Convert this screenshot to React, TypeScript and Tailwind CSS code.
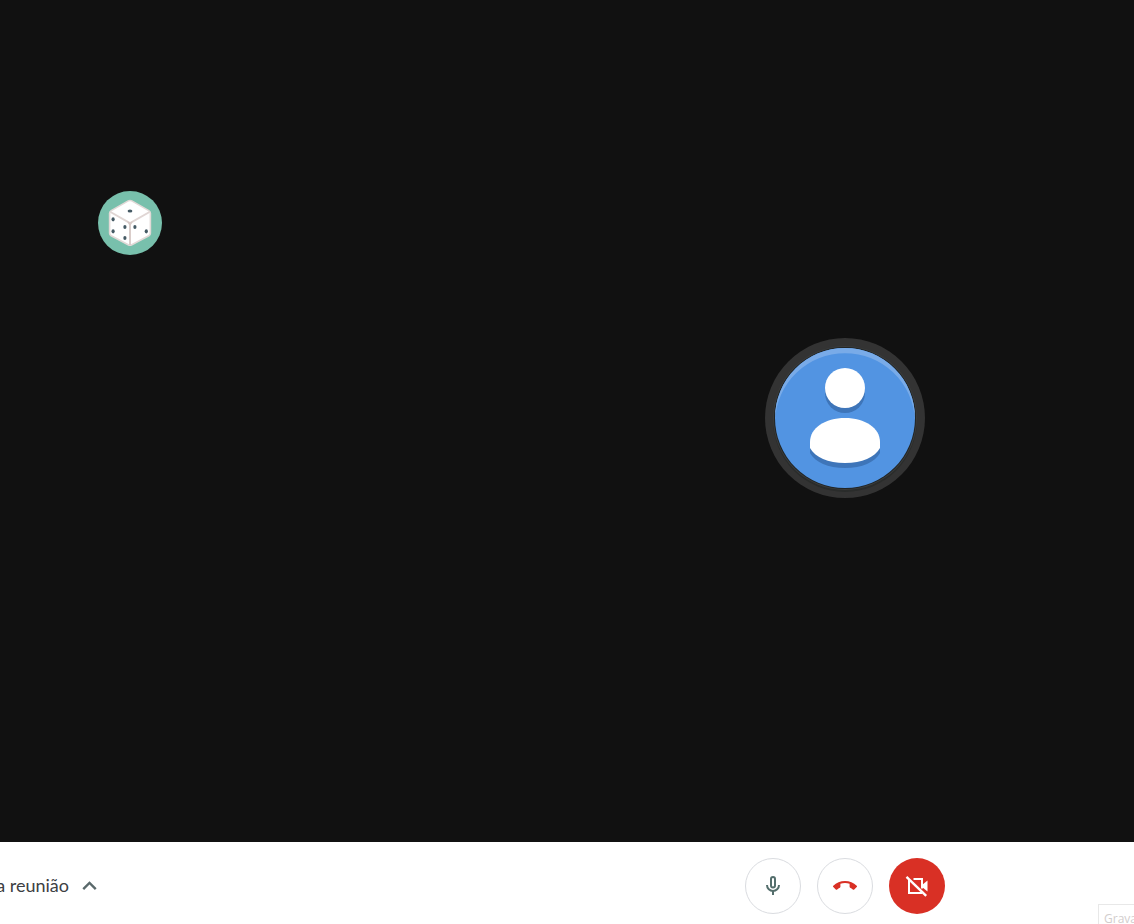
import React from "react";
import { MdCallEnd } from "react-icons/md";

function DiceAvatar() {
  return (
    <svg viewBox="0 0 64 64" className="size-16" role="img" aria-label="Dado">
      <circle cx="32" cy="32" r="32" fill="#78c0ac" />
      <path
        d="M30.2 9.9 Q32 9 33.8 9.9 L50.8 19.6 Q52.4 20.6 52.4 22.2 V42.2 Q52.4 43.8 50.8 44.8 L33.8 53.8 Q32 54.8 30.2 53.8 L13.2 44.8 Q11.6 43.8 11.6 42.2 V22.2 Q11.6 20.6 13.2 19.6 Z"
        fill="#fff"
        stroke="#e2d9d7"
        strokeWidth="1.6"
      />
      <path d="M12.5 21 L32 32 L51.5 21" fill="none" stroke="#e0d6d4" strokeWidth="2" />
      <path d="M29 30 L32 31.5 L35 30 L32.9 34 V54 H31.1 V34 Z" fill="#d6c8c5" />
      <g fill="#455a64">
        <ellipse cx="32" cy="20" rx="2.4" ry="1.6" />
        <ellipse cx="15.1" cy="28.3" rx="1.6" ry="2.1" />
        <ellipse cx="15.1" cy="40.3" rx="1.6" ry="2.1" />
        <ellipse cx="26.9" cy="36" rx="1.6" ry="2.1" />
        <ellipse cx="26.9" cy="47" rx="1.6" ry="2.1" />
        <ellipse cx="36.9" cy="36" rx="1.6" ry="2.1" />
        <ellipse cx="48.3" cy="40.3" rx="1.6" ry="2.1" />
      </g>
    </svg>
  );
}

function PersonAvatar() {
  const body = "M45 104 C45 90 60 80 80 80 C100 80 115 90 115 104 V110 C110 119 97 125 80 125 C63 125 50 119 45 110 Z";
  return (
    <svg viewBox="0 0 160 160" className="size-40" role="img" aria-label="Participante">
      <circle cx="80" cy="80" r="80" fill="#333333" />
      <circle cx="80" cy="82" r="72" fill="#2a2c2b" />
      <circle cx="80" cy="80" r="72" fill="#3b3c3b" />
      <circle cx="80" cy="80" r="71" fill="#202425" />
      <circle cx="80" cy="80" r="70" fill="#5294e2" />
      <path d="M10 80 A70 70 0 0 1 150 80 L149.95 82.5 A70 70 0 0 0 10.05 82.5 Z" fill="#79abe8" />
      <g fill="#3e75b9">
        <circle cx="80" cy="55" r="20" />
        <path d={body} transform="translate(0 5)" />
      </g>
      <g fill="#fff">
        <circle cx="80" cy="50" r="20" />
        <path d={body} />
      </g>
    </svg>
  );
}

function MicIcon() {
  return (
    <svg viewBox="0 0 24 24" className="size-6" fill="none" stroke="#546e6c" strokeWidth="2" aria-hidden="true">
      <rect x="10" y="3" width="4" height="10.5" rx="2" />
      <path d="M6 11 C6 14.4 8.8 17 12 17 C15.2 17 18 14.4 18 11" />
      <path d="M12 17 V21" />
    </svg>
  );
}

function CameraOffIcon() {
  return (
    <svg viewBox="0 0 24 24" className="size-6" aria-hidden="true">
      <g fill="none" stroke="#fff" strokeWidth="2">
        <path d="M8.5 5 H17 V14.5" />
        <path d="M4 5.5 V19 H17" />
        <path d="M1.5 2.8 L21.2 21.8" strokeWidth="2.4" />
      </g>
      <path d="M17 11 L22.5 6.5 V17.5 L17 13 Z" fill="#fff" />
    </svg>
  );
}

const roundButton =
  "flex size-14 items-center justify-center rounded-full border border-[#dadce0] bg-white";

export default function App() {
  return (
    <div className="relative flex min-h-screen flex-col overflow-hidden bg-white font-['Lato',sans-serif]">
      <main className="flex flex-1 bg-[#111111]">
        <section className="w-[556px] shrink-0 pt-[191px] pl-[98px]">
          <DiceAvatar />
        </section>
        <section className="flex flex-1 items-center justify-center pb-1.5">
          <PersonAvatar />
        </section>
      </main>

      <footer className="flex h-[82px] items-center pt-1.5">
        <div className="flex w-[556px] shrink-0">
          <button type="button" className="flex items-center gap-2 text-lg leading-6 text-[#3c4043]">
            <span className="flex w-[69px] justify-end overflow-hidden pb-0.5 whitespace-nowrap">a reunião</span>
            <svg viewBox="0 0 24 24" className="size-6" fill="#5a696b" aria-hidden="true">
              <path d="M12.5 7.2 L5.4 14.3 L7.1 16 L12.5 10.6 L17.9 16 L19.6 14.3 Z" />
            </svg>
          </button>
        </div>
        <div className="flex flex-1 items-center justify-center gap-4">
          <button type="button" aria-label="Desativar microfone" className={roundButton}>
            <MicIcon />
          </button>
          <button type="button" aria-label="Sair da chamada" className={roundButton}>
            <MdCallEnd className="size-6 text-[#d93025]" />
          </button>
          <button
            type="button"
            aria-label="Ativar câmera"
            className="flex size-14 items-center justify-center rounded-full bg-[#d93025]"
          >
            <CameraOffIcon />
          </button>
        </div>
      </footer>

      <div className="absolute right-0 bottom-0 h-5 w-9 overflow-hidden border-t border-l border-[#e8e8e8] bg-white pt-1 pl-[5px] font-['Open_Sans',sans-serif] text-[12px] leading-5 whitespace-nowrap text-[#d2cdcd]">
        Grava
      </div>
    </div>
  );
}
